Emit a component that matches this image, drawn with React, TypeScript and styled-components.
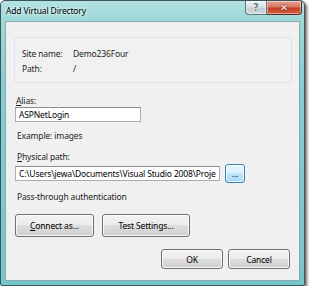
import React from 'react';
import styled, { createGlobalStyle } from 'styled-components';

const GlobalStyle = createGlobalStyle`
  html, body {
    margin: 0;
    padding: 0;
    background: #ffffff;
  }
  body {
    font-family: "Noto Sans", "Open Sans", sans-serif;
    font-size: 8.5px;
    letter-spacing: -0.15px;
    color: #1e1e1e;
  }
`;

const Window = styled.div`
  width: 305px;
  height: 286px;
  box-sizing: border-box;
  display: flex;
  flex-direction: column;
  border: 1px solid #3b5457;
  border-radius: 5px 5px 2px 2px;
  background: linear-gradient(180deg, #b4e2e2 0%, #9fd9da 6%, #84cfd0 30%, #74c7c9 100%);
  box-shadow: 2px 2px 3px rgba(0, 0, 0, 0.6);
`;

const TitleBar = styled.div`
  height: 20px;
  display: flex;
  align-items: flex-start;
  justify-content: space-between;
  padding: 0 2px 0 5px;
`;

const Title = styled.div`
  line-height: 20px;
  color: #000;
  text-shadow: 0 0 5px #e8fbfb, 0 0 3px #e8fbfb;
`;

const Caption = styled.div`
  display: flex;
`;

const CaptionButton = styled.div<{ $close?: boolean }>`
  height: 14px;
  width: ${(p) => (p.$close ? '35px' : '22px')};
  display: flex;
  align-items: center;
  justify-content: center;
  box-sizing: border-box;
  border: 1px solid ${(p) => (p.$close ? '#5a2b22' : '#5f7478')};
  border-top: none;
  border-left-width: ${(p) => (p.$close ? '0' : '1px')};
  border-radius: ${(p) => (p.$close ? '0 0 4px 0' : '0 0 0 4px')};
  background: ${(p) =>
    p.$close
      ? 'linear-gradient(180deg, #e7a594 0%, #d8775f 45%, #c5412a 55%, #d35b40 100%)'
      : 'linear-gradient(180deg, #eef4f5 0%, #d9e4e7 45%, #bfcdd2 55%, #cfdcdf 100%)'};
  box-shadow: inset 0 0 0 1px rgba(255, 255, 255, 0.45);
  font-family: "DejaVu Sans", sans-serif;
  font-weight: bold;
  font-size: 10px;
  letter-spacing: 0;
  color: ${(p) => (p.$close ? '#ffffff' : '#6e7a7e')};
  text-shadow: ${(p) =>
    p.$close ? '0 0 2px #5a1a10, 0 0 1px #5a1a10' : '0 0 2px #ffffff, 0 0 1px #ffffff'};
`;

const Client = styled.div`
  flex: 1;
  margin: 0 4px 4px 4px;
  border: 1px solid #8ea9ad;
  background: #f0f0f0;
  display: flex;
  flex-direction: column;
  padding: 15px 7px 0 8px;
`;

const GroupBox = styled.div`
  height: 46px;
  box-sizing: border-box;
  border: 1px solid #dde3e6;
  border-radius: 3px;
  background: #f1f1f1;
  padding: 8px 0 0 7px;
  display: grid;
  grid-template-columns: 51px 1fr;
  grid-auto-rows: 15px;
  align-items: center;
`;

const Text = styled.div<{ $top?: number; $left?: number }>`
  line-height: 12px;
  white-space: nowrap;
  margin-top: ${(p) => p.$top ?? 0}px;
  margin-left: ${(p) => p.$left ?? 0}px;
`;

const TextBox = styled.div<{ $width: number }>`
  width: ${(p) => p.$width}px;
  height: 15px;
  margin-left: 1px;
  box-sizing: border-box;
  border: 1px solid #abadb3;
  border-top-color: #8a8d94;
  background: #ffffff;
  padding: 0 2px 0 3px;
  line-height: 13px;
  white-space: nowrap;
  overflow: hidden;
  color: #000;
`;

const Row = styled.div<{ $top?: number; $gap?: number; $justify?: string }>`
  display: flex;
  align-items: center;
  gap: ${(p) => p.$gap ?? 0}px;
  margin-top: ${(p) => p.$top ?? 0}px;
  justify-content: ${(p) => p.$justify ?? 'flex-start'};
`;

const Button = styled.div<{ $width: number; $height: number; $focused?: boolean }>`
  width: ${(p) => p.$width}px;
  height: ${(p) => p.$height}px;
  box-sizing: border-box;
  border: 1px solid ${(p) => (p.$focused ? '#3c7fb1' : '#707070')};
  border-radius: 3px;
  background: ${(p) =>
    p.$focused
      ? 'linear-gradient(180deg, #eaf6fd 0%, #d9f0fc 50%, #bee6fd 50%, #a7d9f5 100%)'
      : 'linear-gradient(180deg, #f2f2f2 0%, #ebebeb 50%, #dddddd 50%, #cfcfcf 100%)'};
  box-shadow: inset 0 0 0 1px rgba(255, 255, 255, 0.8);
  display: flex;
  align-items: center;
  justify-content: center;
  color: #000;
  white-space: nowrap;
`;

const FirstButton = styled(Button)`
  margin-left: 1px;
`;

const LastButton = styled(Button)`
  margin-right: 2px;
`;

export default function App() {
  return (
    <>
      <GlobalStyle />
      <Window>
        <TitleBar>
          <Title>Add Virtual Directory</Title>
          <Caption>
            <CaptionButton>?</CaptionButton>
            <CaptionButton $close>✕</CaptionButton>
          </Caption>
        </TitleBar>
        <Client>
          <GroupBox>
            <span>Site name:</span>
            <span>Demo236Four</span>
            <span>Path:</span>
            <span>/</span>
          </GroupBox>
          <Text $top={12} $left={2}>
            <u>A</u>lias:
          </Text>
          <TextBox $width={126}>ASPNetLogin</TextBox>
          <Text $top={8} $left={3}>Example: images</Text>
          <Text $top={9} $left={3}>
            <u>P</u>hysical path:
          </Text>
          <Row $top={1} $gap={5}>
            <TextBox $width={205}>C:\Users\jewa\Documents\Visual Studio 2008\Proje</TextBox>
            <Button $width={20} $height={19} $focused>...</Button>
          </Row>
          <Text $top={8} $left={3}>Pass-through authentication</Text>
          <Row $top={11} $gap={8}>
            <FirstButton $width={79} $height={23}>
              <span>
                <u>C</u>onnect as...
              </span>
            </FirstButton>
            <Button $width={88} $height={23}>Test Settings...</Button>
          </Row>
          <Row $top={12} $gap={5} $justify="flex-end">
            <Button $width={62} $height={20}>OK</Button>
            <LastButton $width={62} $height={20}>Cancel</LastButton>
          </Row>
        </Client>
      </Window>
    </>
  );
}
